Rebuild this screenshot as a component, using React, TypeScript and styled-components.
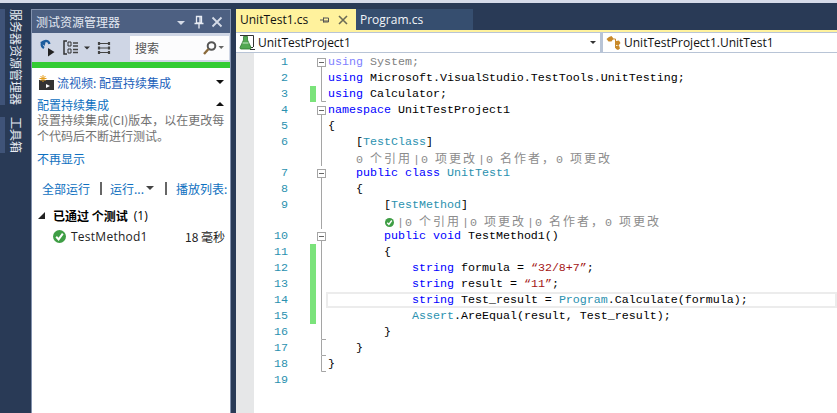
import React from "react";
import styled, { createGlobalStyle } from "styled-components";

const Global = createGlobalStyle`
  html, body { margin: 0; padding: 0; overflow: hidden; background: #293a56; }
`;

const CJK = `"Noto Sans CJK SC", "Noto Sans", sans-serif`;
const UI = `"Open Sans", "Noto Sans CJK SC", sans-serif`;

const Page = styled.div`
  width: 837px; height: 413px; display: flex; flex-direction: column; overflow: hidden;
  background: #293a56; font-family: ${CJK};
`;
const TopStrip = styled.div`height: 3px; background: #d6dbe9; flex: none;`;
const Main = styled.div`flex: 1; display: flex; padding-top: 6px; min-height: 0;`;

const Rail = styled.div`width: 31px; flex: none; display: flex; flex-direction: column; align-items: flex-start; gap: 12px;`;
const RailTab = styled.div`
  writing-mode: vertical-rl; text-orientation: sideways; border-left: 5px solid #3f5378;
  padding-left: 5px; font-size: 12px; line-height: 13px; color: #e6eaf2; white-space: nowrap;
  height: ${(p: { $h: number }) => p.$h}px; box-sizing: border-box;
`;

const Panel = styled.div`
  width: 200px; flex: none; display: flex; flex-direction: column; background: #fff;
  border-left: 1px solid #8291ad; border-right: 1px solid #8291ad; box-sizing: border-box; border-top: 1px solid #8291ad;
`;
const PanelHead = styled.div`
  height: 23px; flex: none; background: #4d6082; color: #e4e9f2; font-size: 12px;
  display: flex; align-items: center; padding: 0 7px 0 4px;
`;
const PanelTitle = styled.div`flex: 1;`;
const HeadIcons = styled.div`display: flex; align-items: center; gap: 6px;`;
const Toolbar = styled.div`
  height: 29px; flex: none; background: #cfd6e5; display: flex; align-items: center; padding: 0 1px 0 7px; box-sizing: border-box;
`;
const ToolIcons = styled.div`flex: 1; display: flex; align-items: center; gap: 5px;`;
const SearchBox = styled.div`
  width: 99px; height: 24px; background: #fcfcfd; display: flex; align-items: center; padding: 0 3px 0 5px;
  box-sizing: border-box; font-size: 12px; color: #555; justify-content: space-between;
`;
const GreenBar = styled.div`height: 6px; flex: none; background: #33cc33;`;
const PanelBody = styled.div`flex: 1; display: flex; flex-direction: column; padding: 0 1px 0 5px; font-size: 12px; min-width: 0;`;
const Stream = styled.div`
  display: flex; align-items: center; height: 16px; margin-top: 6px; padding: 0 2px; color: #1c5fbb;
`;
const StreamText = styled.span`flex: 1; margin-left: 3px;`;
const Caret = styled.span<{ $up?: boolean }>`
  width: 0; height: 0; border-left: 4px solid transparent; border-right: 4px solid transparent; margin-right: 3px;
  ${(p) => (p.$up ? "border-bottom: 4px solid #111;" : "border-top: 4px solid #111;")}
`;
const SubHead = styled.div`
  display: flex; align-items: center; justify-content: space-between; height: 16px; margin-top: 6px; padding-right: 2px; color: #0e70c0;
`;
const Desc = styled.div`color: #717171; line-height: 16px; white-space: nowrap;`;
const Link = styled.div`color: #0e70c0; margin-top: 7px; height: 16px; line-height: 16px;`;
const Actions = styled.div`
  display: flex; align-items: center; height: 16px; margin-top: 13px; padding-left: 5px; color: #0e70c0; white-space: nowrap;
`;
const Sep = styled.span<{ $l: number; $r: number }>`
  width: 2px; height: 13px; background: #666; flex: none; margin: 0 ${(p) => p.$r}px 0 ${(p) => p.$l}px;
`;
const ActionCaret = styled.svg`flex: none; margin-left: 1px;`;
const GroupRow = styled.div`
  display: flex; align-items: center; height: 16px; margin-top: 11px; color: #000;
`;
const GroupTitle = styled.span`font-weight: 700; margin-left: 7px; white-space: pre;`;
const GroupCount = styled.span`margin-left: 6px; font-family: ${UI};`;
const TestRow = styled.div`
  display: flex; align-items: center; height: 16px; margin-top: 5px; padding-left: 16px; padding-right: 2px; color: #222; white-space: nowrap;
`;
const TestName = styled.span`flex: 1; margin-left: 5px; font-family: ${UI}; letter-spacing: 0.25px;`;
const TestTime = styled.span`margin-right: 2px;`;

const Editor = styled.div`flex: 1; margin-left: 5px; display: flex; flex-direction: column; min-width: 0;`;
const Tabs = styled.div`height: 21px; flex: none; display: flex;`;
const Tab = styled.div<{ $active?: boolean }>`
  width: ${(p) => (p.$active ? 120 : 117)}px; box-sizing: border-box; display: flex; align-items: center; padding-left: 4px; gap: 0;
  background: ${(p) => (p.$active ? "#fff29d" : "#364e6f")}; color: ${(p) => (p.$active ? "#111" : "#f2f4f8")};
  font-family: ${UI}; font-size: 12px;
`;
const TabName = styled.span`width: 80px;`;
const TabIcons = styled.span`display: flex; align-items: center; gap: 8px;`;
const YellowLine = styled.div`height: 2px; background: #fff29d; flex: none;`;
const NavBar = styled.div`
  height: 21px; flex: none; display: flex; background: #b8c4d6; border-top: 1px solid #b8c4d6; border-bottom: 1px solid #b8c4d6; box-sizing: border-box; gap: 3px;
`;
const NavBox = styled.div<{ $wide?: boolean }>`
  ${(p) => (p.$wide ? "width: 364px; flex: none;" : "flex: 1;")}
  background: #fff; display: flex; align-items: center; padding-left: 3px; gap: 3px; font-family: ${UI}; font-size: 12px; color: #111; box-sizing: border-box;
`;
const NavLabel = styled.span`flex: 1;`;
const NavCaret = styled.span`
  width: 0; height: 0; border-left: 3px solid transparent; border-right: 3px solid transparent; border-top: 3px solid #333; margin-right: 4px;
`;
const CodeWrap = styled.div`flex: 1; display: flex; background: #fff; min-height: 0;`;
const Gutter = styled.div`width: 18px; flex: none; background: #e6e7e8;`;
const CodeList = styled.div`flex: 1; min-width: 0; padding-top: 1px;`;
const Row = styled.div<{ $lens?: boolean }>`
  display: grid; grid-template-columns: 34px 22px 6px 12px 1fr; height: ${(p) => (p.$lens ? 15 : 16)}px;
`;
const LineNo = styled.div`
  text-align: right; color: #2b91af; font: 11.67px/16px "Liberation Mono", monospace;
`;
const Mark = styled.div<{ $on?: boolean }>`background: ${(p) => (p.$on ? "#7be37b" : "transparent")}; grid-column: 3;`;
const FoldCell = styled.div`grid-column: 4; overflow: hidden;`;
const Code = styled.div<{ $current?: boolean }>`
  grid-column: 5; white-space: pre; color: #000; font: 11.67px/16px "Liberation Mono", monospace;
  ${(p) => (p.$current ? "margin-left: -2px; padding-left: 2px; box-shadow: inset 0 0 0 2px #ececec; line-height: 16px;" : "")}
`;
const Tok = styled.span<{ $k: "kw" | "ty" | "st" | "fk" | "fg" }>`
  color: ${(p) => ({ kw: "#0000ff", ty: "#2b91af", st: "#a31515", fk: "#7f7fff", fg: "#808080" }[p.$k])};
`;
const Lens = styled.div`
  grid-column: 5; white-space: pre; color: #8c8c8c; display: flex; align-items: center;
  font: 11.67px/15px "Liberation Mono", monospace;
`;
const Han = styled.span`font-family: ${CJK}; font-size: 12px; letter-spacing: 2px;`;
const Pipe = styled.span`padding: 0 1px;`;
const LensIndent = styled.span`display: inline-block; width: ${(p: { $w: number }) => p.$w}px; flex: none;`;
const LensCheck = styled.span`display: inline-flex; width: 12px; flex: none; padding-left: 1px; box-sizing: border-box;`;

const Check = ({ s = 13 }: { s?: number }) => (
  <svg width={s} height={s} viewBox="0 0 13 13">
    <circle cx="6.5" cy="6.5" r="6.5" fill="#3f9e45" />
    <path d="M3.2 6.8 L5.6 9.4 L9.8 3.6" fill="none" stroke="#fff" strokeWidth="2" />
  </svg>
);

const Fold = ({ k }: { k: "box" | "line" | "end" | "none" }) => (
  <svg width="12" height="16" viewBox="0 0 12 16" style={{ display: "block" }}>
    {k === "box" && (
      <>
        <rect x="1.5" y="4.5" width="8" height="8" fill="#fff" stroke="#a5a5a5" />
        <path d="M3 8.5 H8" stroke="#666" />
        <path d="M5.5 12.5 V16" stroke="#a5a5a5" />
      </>
    )}
    {k === "line" && <path d="M5.5 0 V16" stroke="#a5a5a5" />}
    {k === "end" && <path d="M5.5 0 V15.5 H10" stroke="#a5a5a5" fill="none" />}
  </svg>
);

type Seg = [string, ("kw" | "ty" | "st" | "fk" | "fg")?];
type LineDef = { n?: number; fold: "box" | "line" | "end" | "none"; mark?: boolean; cur?: boolean; lens?: "plain" | "check"; segs?: Seg[] };

const lines: LineDef[] = [
  { n: 1, fold: "box", segs: [["using", "fk"], [" "], ["System;", "fg"]] },
  { n: 2, fold: "line", segs: [["using", "kw"], [" Microsoft.VisualStudio.TestTools.UnitTesting;"]] },
  { n: 3, fold: "end", mark: true, segs: [["using", "kw"], [" Calculator;"]] },
  { n: 4, fold: "box", segs: [["namespace", "kw"], [" UnitTestProject1"]] },
  { n: 5, fold: "line", segs: [["{"]] },
  { n: 6, fold: "line", segs: [["    ["], ["TestClass", "ty"], ["]"]] },
  { fold: "line", lens: "plain" },
  { n: 7, fold: "box", segs: [["    "], ["public class", "kw"], [" "], ["UnitTest1", "ty"]] },
  { n: 8, fold: "line", segs: [["    {"]] },
  { n: 9, fold: "line", segs: [["        ["], ["TestMethod", "ty"], ["]"]] },
  { fold: "line", lens: "check" },
  { n: 10, fold: "box", segs: [["        "], ["public void", "kw"], [" TestMethod1()"]] },
  { n: 11, fold: "line", mark: true, segs: [["        {"]] },
  { n: 12, fold: "line", mark: true, segs: [["            "], ["string", "kw"], [" formula = "], ["“32/8+7”", "st"], [";"]] },
  { n: 13, fold: "line", mark: true, segs: [["            "], ["string", "kw"], [" result = "], ["“11”", "st"], [";"]] },
  { n: 14, fold: "line", mark: true, cur: true, segs: [["            "], ["string", "kw"], [" Test_result = "], ["Program", "ty"], [".Calculate(formula);"]] },
  { n: 15, fold: "line", mark: true, segs: [["            "], ["Assert", "ty"], [".AreEqual(result, Test_result);"]] },
  { n: 16, fold: "end", segs: [["        }"]] },
  { n: 17, fold: "end", segs: [["    }"]] },
  { n: 18, fold: "end", segs: [["}"]] },
  { n: 19, fold: "none", segs: [] },
];

const LensBody = ({ lead }: { lead?: boolean }) => (
  <span>
    {lead && <Pipe>|</Pipe>}0 <Han>个引用</Han><Pipe>|</Pipe>0 <Han>项更改</Han><Pipe>|</Pipe>0 <Han>{"名作者\uFF0C"}</Han>0 <Han>项更改</Han>
  </span>
);

export default function App() {
  return (
    <Page>
      <Global />
      <TopStrip />
      <Main>
        <Rail>
          <RailTab $h={96}>服务器资源管理器</RailTab>
          <RailTab $h={36}>工具箱</RailTab>
        </Rail>
        <Panel>
          <PanelHead>
            <PanelTitle>测试资源管理器</PanelTitle>
            <HeadIcons>
              <svg width="12" height="12" viewBox="0 0 12 12"><path d="M2 5 H10 L6 9 Z" fill="#d5dbe7" /></svg>
              <svg width="12" height="14" viewBox="0 0 12 14"><path d="M3.5 1.5 H8.5 V8 H3.5 Z M1.5 8.5 H10.5 M6 9 V13.5 M7 2 V8" fill="none" stroke="#e8ecf4" strokeWidth="1.3" /></svg>
              <svg width="12" height="12" viewBox="0 0 12 12"><path d="M1.5 1.5 L10.5 10.5 M10.5 1.5 L1.5 10.5" stroke="#d5dbe7" strokeWidth="1.8" /></svg>
            </HeadIcons>
          </PanelHead>
          <Toolbar>
            <ToolIcons>
              <svg width="16" height="18" viewBox="0 0 16 18">
                <path d="M5 9 C1.5 7 2 2.5 6 2 C8 1.8 10 3 10.5 5" fill="none" stroke="#1c5c9c" strokeWidth="2.2" />
                <path d="M1 2 L7 1 L5.5 6 Z" fill="#1c5c9c" transform="translate(0 1)" />
                <path d="M9 9 L15.5 13 L9 17.5 Z" fill="#222" />
              </svg>
              <svg width="16" height="15" viewBox="0 0 16 15" style={{ marginLeft: 3 }}>
                <path d="M4 1 H1 V14 H4" fill="none" stroke="#333" strokeWidth="1.5" />
                <path d="M5 2 H8 V6 H5 Z M5 9 H8 V13 H5 Z" fill="none" stroke="#333" />
                <path d="M10 3 H15 M10 6 H15 M10 9.5 H15 M10 12.5 H15" stroke="#444" strokeWidth="1.3" />
              </svg>
              <svg width="8" height="6" viewBox="0 0 8 6" style={{ marginLeft: -1 }}><path d="M1 1.5 H7 L4 4.5 Z" fill="#333" /></svg>
              <svg width="14" height="14" viewBox="0 0 14 14" style={{ marginLeft: 1 }}>
                <path d="M1 2.5 H13 M1 7 H13 M1 11.5 H13" stroke="#444" strokeWidth="1.2" />
                <path d="M2 1 V13 M12 1 V13" stroke="#444" strokeWidth="2.2" strokeDasharray="3 1.5" />
              </svg>
            </ToolIcons>
            <SearchBox>
              <span>搜索</span>
              <svg width="24" height="14" viewBox="0 0 24 14">
                <circle cx="9.5" cy="5" r="3.8" fill="none" stroke="#555" strokeWidth="2" />
                <path d="M6.5 8 L2 13" stroke="#8a6a3a" strokeWidth="2.4" />
                <path d="M16.5 5 H22 L19.2 8 Z" fill="#666" />
              </svg>
            </SearchBox>
          </Toolbar>
          <GreenBar />
          <PanelBody>
            <Stream>
              <svg width="15" height="15" viewBox="0 0 15 15">
                <rect x="0" y="5" width="15" height="10" fill="#333" />
                <path d="M7 9 L11 11 L7 13 Z" fill="#fff" />
                <path d="M4 0 V7 M0.5 3.5 H7.5 M1.5 1 L6.5 6 M6.5 1 L1.5 6" stroke="#e6a020" strokeWidth="1" />
              </svg>
              <StreamText>流视频: 配置持续集成</StreamText>
              <Caret />
            </Stream>
            <SubHead>
              配置持续集成
              <Caret $up />
            </SubHead>
            <Desc>
              {"设置持续集成(CI)版本\uFF0C以在更改每"}
              <br />
              个代码后不断进行测试。
            </Desc>
            <Link>不再显示</Link>
            <Actions>
              全部运行
              <Sep $l={10} $r={8} />
              运行...
              <ActionCaret width="10" height="6" viewBox="0 0 10 6"><path d="M1 1 H9 L5 5 Z" fill="#444" /></ActionCaret>
              <Sep $l={10} $r={9} />
              播放列表:
            </Actions>
            <GroupRow>
              <svg width="9" height="9" viewBox="0 0 9 9"><path d="M8 1 V8 H1 Z" fill="#222" /></svg>
              <GroupTitle>已通过 个测试</GroupTitle>
              <GroupCount>(1)</GroupCount>
            </GroupRow>
            <TestRow>
              <Check />
              <TestName>TestMethod1</TestName>
              <TestTime>18 毫秒</TestTime>
            </TestRow>
          </PanelBody>
        </Panel>
        <Editor>
          <Tabs>
            <Tab $active>
              <TabName>UnitTest1.cs</TabName>
              <TabIcons>
                <svg width="10" height="10" viewBox="0 0 10 10"><path d="M0 5 H3 M3.5 2.5 V7.5 M3.5 3 H8.5 V7 H3.5 M3.5 6 H8.5" fill="none" stroke="#555" /></svg>
                <svg width="10" height="10" viewBox="0 0 10 10"><path d="M1 1 L9 9 M9 1 L1 9" stroke="#6b6b55" strokeWidth="1.6" /></svg>
              </TabIcons>
            </Tab>
            <Tab>Program.cs</Tab>
          </Tabs>
          <YellowLine />
          <NavBar>
            <NavBox $wide>
              <svg width="16" height="15" viewBox="0 0 16 15">
                <path d="M1 0.5 H14.5 V12 M14 12.5 H11 M11 14.5 H16" fill="none" stroke="#333" />
                <path d="M4.5 1.5 H8.5 V5 L12 12.5 Q12 14 11 14 H2 Q1 14 1 12.5 L4.5 5 Z" fill="#52a852" stroke="#2f7a2f" strokeWidth="0.8" />
                <path d="M3.5 8 H9.5" stroke="#c8e8c8" />
              </svg>
              <NavLabel>UnitTestProject1</NavLabel>
              <NavCaret />
            </NavBox>
            <NavBox>
              <svg width="15" height="14" viewBox="0 0 15 14">
                <path d="M3 1 L5.5 0 L7.5 2.5 L5.5 5.5 L2.5 5.5 L0.5 3 Z M10 5 L13 4.5 L14.5 7 L12.5 9.5 L10 9 Z M10 10 L13 9.5 L14 12.5 L12 14 L10 13 Z" fill="#c98a2a" />
                <path d="M5 3 H9.5 V12 H11 M9 7 H11" fill="none" stroke="#c98a2a" />
              </svg>
              <NavLabel>UnitTestProject1.UnitTest1</NavLabel>
            </NavBox>
          </NavBar>
          <CodeWrap>
            <Gutter />
            <CodeList>
              {lines.map((l, i) => (
                <Row key={i} $lens={!!l.lens}>
                  <LineNo>{l.n}</LineNo>
                  <Mark $on={l.mark} />
                  <FoldCell><Fold k={l.fold} /></FoldCell>
                  {l.lens ? (
                    <Lens>
                      {l.lens === "plain" ? (
                        <LensIndent $w={28} />
                      ) : (
                        <>
                          <LensIndent $w={56} />
                          <LensCheck><Check s={9} /></LensCheck>
                        </>
                      )}
                      <LensBody lead={l.lens === "check"} />
                    </Lens>
                  ) : (
                    <Code $current={l.cur}>
                      {l.segs?.map(([t, k], j) => (k ? <Tok key={j} $k={k}>{t}</Tok> : <span key={j}>{t}</span>))}
                    </Code>
                  )}
                </Row>
              ))}
            </CodeList>
          </CodeWrap>
        </Editor>
      </Main>
    </Page>
  );
}
